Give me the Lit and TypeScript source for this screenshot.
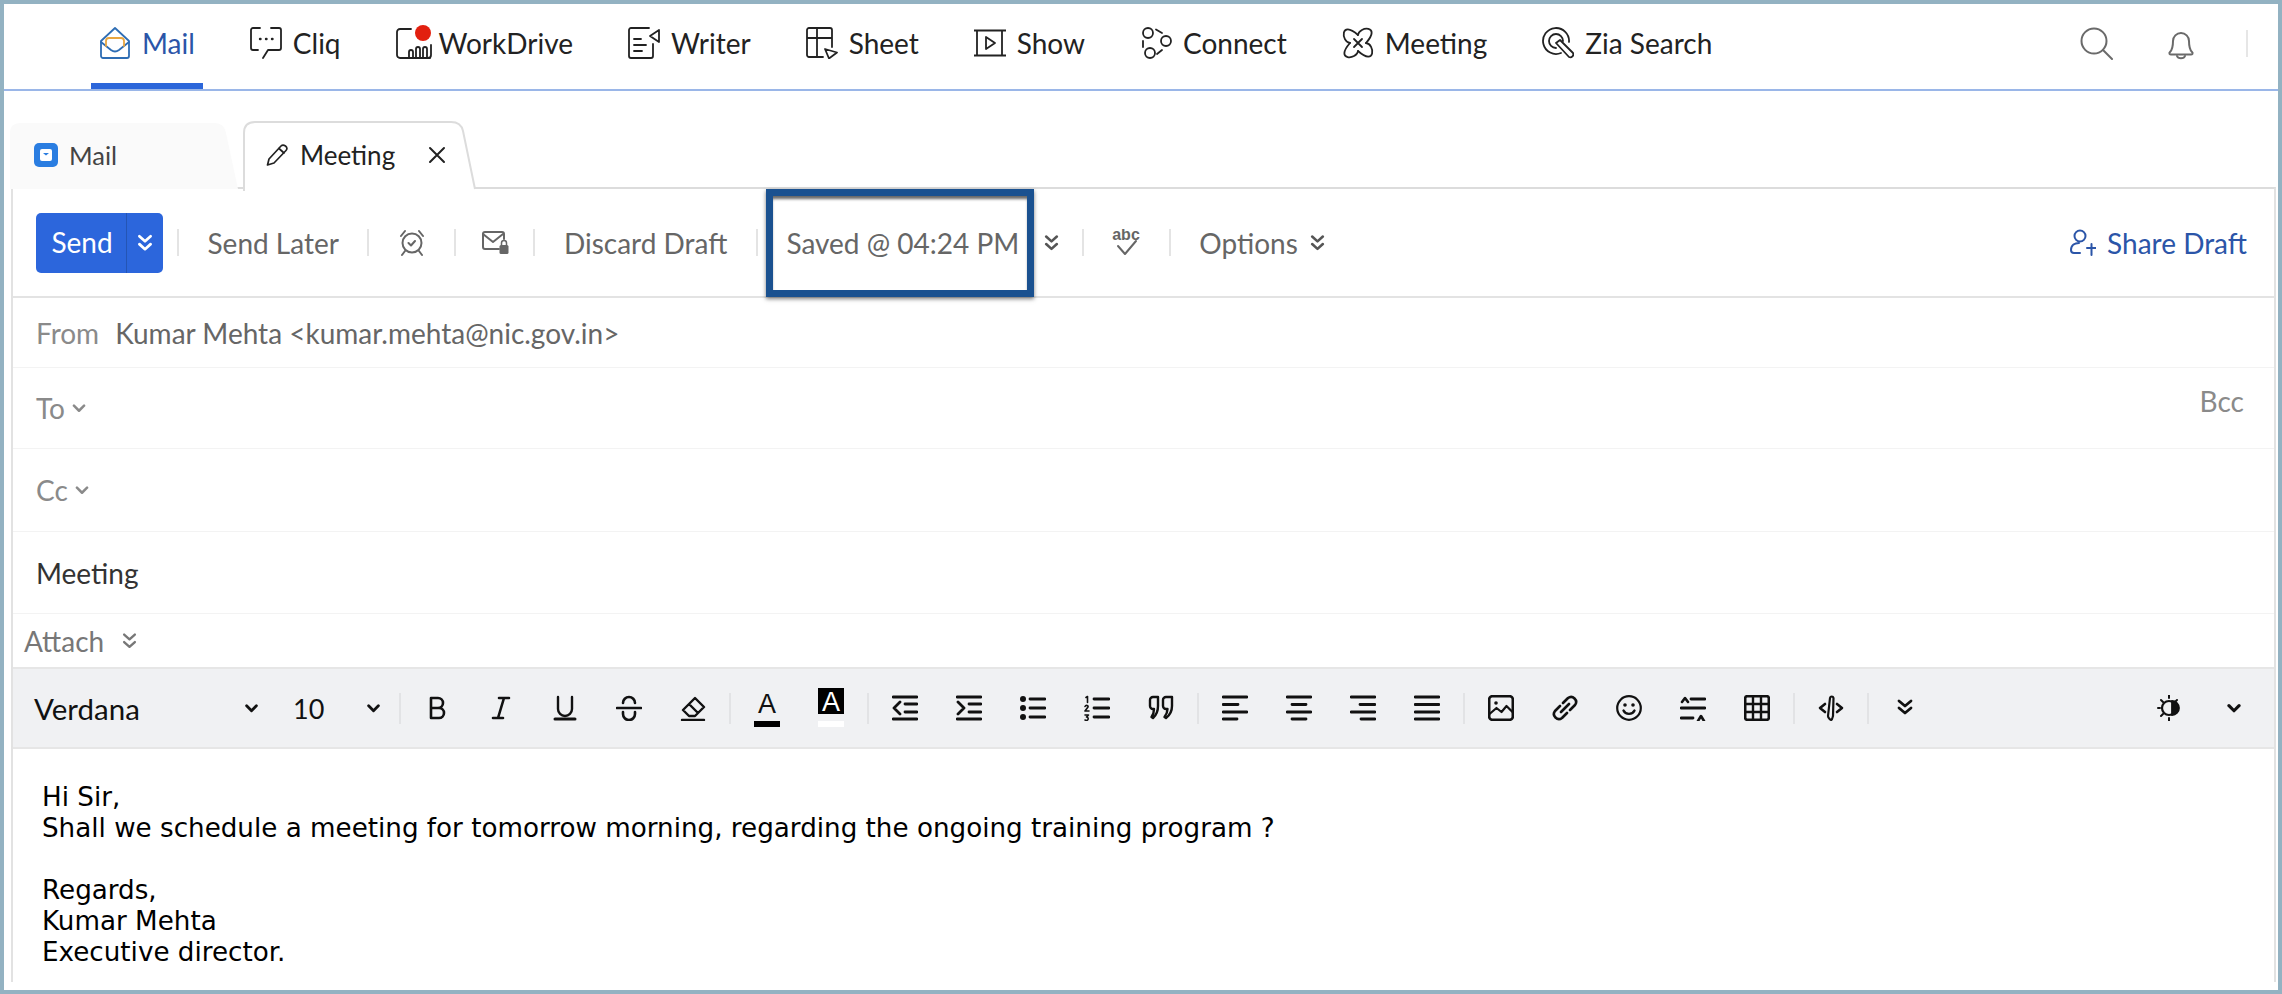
import { LitElement, html, css, svg } from "lit";
import { customElement } from "lit/decorators.js";

const ic = (w: number, h: number, body: unknown, cls = "") =>
  html`<svg class="ic ${cls}" width=${w} height=${h} viewBox="0 0 ${w} ${h}" fill="none" stroke="currentColor" stroke-width="1.8" stroke-linecap="round" stroke-linejoin="round">${body}</svg>`;

const lobe = "M16 8C17 -1 40 -2 24 16";
const navIcons: Record<string, unknown> = {
  Mail: svg`<path d="M2 14 16 1l14 13v15a2 2 0 0 1-2 2H4a2 2 0 0 1-2-2Z" stroke="#2e6db4"/><path d="M2 15l10 8q4 3 8 0l10-8" stroke="#2e6db4"/><path d="M7 19v-5a3 3 0 0 1 3-3h12a3 3 0 0 1 3 3v5" stroke="#e9a63f"/>`,
  Cliq: svg`<path d="M10 1H3a2 2 0 0 0-2 2v18a2 2 0 0 0 2 2h5M21 1h8a2 2 0 0 1 2 2v18a2 2 0 0 1-2 2H18l-5 8"/><path d="M10 12h.5M16 12h.5M22 12h.5" stroke-width="2.400"/>`,
  WorkDrive: svg`<path d="M11 31H4a3 3 0 0 1-3-3V5a3 3 0 0 1 3-3h11M35 18v10a3 3 0 0 1-3 3"/><path d="M10 31h24M13 31v-6a2 2 0 0 1 4 0v6M20 31V22a2 2 0 0 1 4 0v9M27 31v-9a2 2 0 0 1 4 0v9"/>`,
  Writer: svg`<path d="M21 1H3a2 2 0 0 0-2 2v26a2 2 0 0 0 2 2h20a2 2 0 0 0 2-2V17"/><path d="M31 3l-9 6 9 6ZM6 12h7M6 18h12M6 24h8"/>`,
  Sheet: svg`<path d="M17 30H3a2 2 0 0 1-2-2V3a2 2 0 0 1 2-2h21a2 2 0 0 1 2 2v17M1 11h25M11 1v29"/><path d="M19 22l12 3.500-8 6Z"/>`,
  Show: svg`<path d="M0 3.500h32M0 28.500h32M3 3.500v25M28 3.500v25"/><path d="M12 10l9 6-9 6Z"/>`,
  Connect: svg`<circle cx="8" cy="6" r="5"/><circle cx="26" cy="14" r="5"/><circle cx="10" cy="26" r="5"/><path d="M16 2.500l6 3.500M3 14v6M17 27l5-4"/>`,
  Meeting: svg`<path d="${lobe}"/><path d="${lobe}" transform="rotate(90 16 16)"/><path d="${lobe}" transform="rotate(180 16 16)"/><path d="${lobe}" transform="rotate(270 16 16)"/><path d="M12 12l8 8M20 12l-8 8"/>`,
  "Zia Search": svg`<path d="M19 26A13 13 0 1 1 27 15"/><path d="M14 21a7 7 0 1 1 7-7"/><path d="M14 16l4-3 13 13a3 3 0 0 1-4 4Z"/>`,
};

const chev2 = (w = 15, h = 18, sw = 2.4) =>
  html`<svg class="ic" width=${w} height=${h} viewBox="0 0 14 16" fill="none" stroke="currentColor" stroke-width=${sw} stroke-linecap="round" stroke-linejoin="round"><path d="M2 2l5 4.500L12 2M2 9l5 4.500L12 9"/></svg>`;
const chev1 = (w = 12, sw = 2.2) =>
  html`<svg class="ic" width=${w} height="9" viewBox="0 0 12 8" fill="none" stroke="currentColor" stroke-width=${sw} stroke-linecap="round" stroke-linejoin="round"><path d="M1.500 1.500 6 6l4.500-4.500"/></svg>`;

const ed = (body: unknown) => ic(26, 26, body, "ed");

@customElement("app-root")
export class AppRoot extends LitElement {
  static styles = css`
    :host { display: block; width: 2282px; height: 994px; box-sizing: border-box; border: 4px solid #93b2c2; background: #fff; font-family: Lato, "Liberation Sans", sans-serif; font-size: 28px; overflow: hidden; position: relative; }
    .ic { display: block; flex: none; }
    .nav { display: flex; align-items: stretch; height: 85px; border-bottom: 2px solid #9ab6e8; box-sizing: content-box; padding-left: 87px; color: #222; }
    .nav-item { display: flex; align-items: center; gap: 11px; padding: 0 8px; margin-right: 39px; height: 85px; box-sizing: border-box; position: relative; white-space: nowrap; padding-bottom: 8px; }
    .nav-item.wd { gap: 7px; }
    .nav-item.on { color: #2b55a8; }
    .nav-item.on::after { content: ""; position: absolute; left: 0; right: 0; bottom: 0; height: 6px; background: #2c66da; }
    .dot { position: absolute; left: 27px; top: 21px; width: 16px; height: 16px; border-radius: 50%; background: #e2200f; }
    .nav-right { margin-left: auto; display: flex; align-items: center; color: #6a6a6a; padding-bottom: 6px; padding-right: 30px; }
    .nav-right .bell { margin-left: 54px; }
    .nav-sep { width: 2px; height: 27px; background: #e6e6e6; margin-left: 51px; }
    .tabs { display: flex; align-items: flex-end; height: 98px; padding-left: 6px; margin-bottom: -2px; position: relative; z-index: 1; }
    .tab-mail { width: 232px; height: 66px; display: flex; align-items: center; padding-left: 24px; gap: 11px; box-sizing: border-box; position: relative; color: #444; font-size: 25.500px; padding-bottom: 2px; }
    .tab-meet { width: 234px; height: 68px; margin-left: 1px; display: flex; align-items: center; padding-left: 22px; box-sizing: border-box; position: relative; color: #222; font-size: 26px; }
    .tab-bg { position: absolute; left: 0; top: 0; z-index: -1; }
    .tab-meet .lbl { margin-left: 11px; }
    .tab-meet .x { margin-left: 33px; }
    .compose { margin-left: 7px; width: 2265px; height: 795px; box-sizing: border-box; border-top: 2px solid #dcdcdc; border-left: 2px solid #e2e2e2; border-right: 2px solid #e2e2e2; position: relative; }
    .tb { display: flex; align-items: center; height: 109px; box-sizing: border-box; border-bottom: 2px solid #e3e3e3; padding-left: 23px; padding-right: 27px; color: #666; white-space: nowrap; }
    .send { display: flex; height: 60px; width: 127px; background: #2c66dc; border-radius: 5px; color: #fff; align-items: center; flex: none; }
    .send .t { width: 91px; box-sizing: border-box; text-align: center; padding-left: 2px; height: 60px; line-height: 58px; border-right: 1px solid #2455b5; }
    .send .c { flex: 1; display: flex; justify-content: center; }
    .sep { width: 2px; height: 27px; background: #e4e4e4; flex: none; margin: 0 28.500px; }
    .sep.first { margin-left: 14px; }
    .lock { margin: 0 -4px; }
    .ch { margin-left: 25px; margin-right: -6px; color: #555; }
    .opt { margin-left: 12px; color: #555; }
    .share { margin-left: auto; display: flex; align-items: center; gap: 11px; color: #2b55a8; }
    .row { display: flex; align-items: center; box-sizing: border-box; border-bottom: 1px solid #f3f3f3; padding-left: 23px; color: #8a8a8a; position: relative; }
    .r-from { height: 70px; }
    .r-from .v { color: #666; margin-left: 16px; }
    .r-to { height: 81px; gap: 7px; }
    .r-cc { height: 83px; gap: 7px; }
    .r-sub { height: 82px; color: #333; }
    .bcc { position: absolute; right: 30px; top: 16px; }
    .attach { display: flex; align-items: center; height: 53px; padding-left: 11px; color: #777; gap: 18px; box-sizing: border-box; }
    .etb { display: flex; align-items: center; height: 82px; box-sizing: border-box; background: #f0f1f3; border-top: 2px solid #e6e6e6; border-bottom: 2px solid #e6e6e6; color: #111; padding-left: 21px; padding-right: 33px; }
    .font { width: 224px; display: flex; align-items: center; font-size: 29.500px; }
    .font svg { margin-left: auto; }
    .size { width: 87px; margin-left: 35px; display: flex; align-items: center; font-size: 27px; }
    .size svg { margin-left: auto; }
    .esep { width: 2px; height: 31px; background: #e2e3e5; flex: none; margin: 0 23px 0 19px; }
    .esep.n { margin: 0 23px; }
    .group { display: flex; gap: 38px; align-items: center; }
    .spacer { flex: 1; }
    .etb-end { display: flex; align-items: center; gap: 44px; }
    .body { padding: 33px 0 0 29px; font-family: "DejaVu Sans", Verdana, sans-serif; font-size: 26.200px; line-height: 31px; color: #000; }
    .body div { min-height: 31px; white-space: nowrap; }
    .callout { position: absolute; left: 762px; top: 185px; width: 268px; height: 108px; box-sizing: border-box; border: 7px solid #1a5190; box-shadow: 0 2px 4px rgba(0,0,0,.5), inset 0 4px 3px -1px rgba(0,0,0,.6); }
  `;

  render() {
    const navs = ["Mail", "Cliq", "WorkDrive", "Writer", "Sheet", "Show", "Connect", "Meeting", "Zia Search"];
    return html`
      <div class="nav">
        ${navs.map(
          (n, i) => html`<div class="nav-item ${i === 0 ? "on" : ""} ${n === "WorkDrive" ? "wd" : ""}">
            ${ic(n === "WorkDrive" ? 36 : 32, 32, navIcons[n])}
            ${n === "WorkDrive" ? html`<span class="dot"></span>` : ""}
            <span>${n}</span>
          </div>`
        )}
        <div class="nav-right">
          ${ic(33, 33, svg`<circle cx="14" cy="14" r="12.500" stroke-width="2"/><path d="M23 23l9 9" stroke-width="2"/>`)}
          <span class="bell">${ic(28, 32, svg`<path d="M3 24c3-3 3-7 3-11a8 8 0 0 1 16 0c0 4 0 8 3 11 1.500 1.500 0 2.500-1 2.500H4C3 26.500 1.500 25.500 3 24Z" stroke-width="2"/><path d="M10 28c1 3 7 3 8 0" stroke-width="2"/>`)}</span>
          <span class="nav-sep"></span>
        </div>
      </div>

      <div class="tabs">
        <div class="tab-mail">
          <svg class="tab-bg" width="232" height="66" viewBox="0 0 232 66"><path d="M0 66V10Q0 0 10 0H205Q214 0 216 10L228 66Z" fill="#fafafa"/></svg>
          <svg class="ic" width="24" height="24" viewBox="0 0 24 24"><rect width="24" height="24" rx="5" fill="#2a7de1"/><rect x="6" y="6" width="12" height="12" rx="2" fill="#fff"/><path d="M9 10l3 2.500 3-2.500Z" fill="#2a7de1"/></svg>
          <span>Mail</span>
        </div>
        <div class="tab-meet">
          <svg class="tab-bg" width="234" height="70" viewBox="0 0 234 70"><path d="M1 70V12Q1 1 12 1H208Q218 1 220 10L232 68" fill="#fff" stroke="#dcdcdc" stroke-width="2"/></svg>
          ${ic(24, 22, svg`<path d="M4 15 16 2c1-1 3-1 4.500 0s2 3 .5 4.500L9 19l-6.500 2Z" stroke-width="1.700"/><path d="M14 4.500 19 9" stroke-width="1.700"/>`)}
          <span class="lbl">Meeting</span>
          <span class="x">${ic(18, 18, svg`<path d="M2 2l14 14M16 2 2 16" stroke-width="2"/>`)}</span>
        </div>
      </div>

      <div class="compose">
        <div class="tb">
          <div class="send"><span class="t">Send</span><span class="c">${chev2(16, 18, 2.4)}</span></div>
          <span class="sep first"></span>
          <span>Send Later</span>
          <span class="sep"></span>
          ${ic(28, 28, svg`<circle cx="14" cy="14" r="9.500" stroke-width="2"/><path d="M10.500 14l2.500 2.500 4-4.500M3 7l4-5M25 7l-4-5M7 22l-3 4M21 22l3 4" stroke-width="2"/>`)}
          <span class="sep"></span>
          <span class="lock">${ic(28, 26, svg`<path d="M18 19H4a2 2 0 0 1-2-2V4a2 2 0 0 1 2-2h17a2 2 0 0 1 2 2v5" stroke-width="2"/><path d="M2 4l10 8 10-8" stroke-width="2"/><rect x="18.500" y="15" width="9" height="9" rx="1.500" fill="currentColor" stroke="none"/><path d="M20.500 15v-2a2.500 2.500 0 0 1 5 0v2" stroke-width="1.500"/>`)}</span>
          <span class="sep"></span>
          <span>Discard Draft</span>
          <span class="sep"></span>
          <span>Saved @ 04:24 PM</span>
          <span class="ch">${chev2()}</span>
          <span class="sep"></span>
          <svg class="ic" width="28" height="28" viewBox="0 0 28 28" fill="none" stroke="currentColor" stroke-width="2" stroke-linecap="round" stroke-linejoin="round"><text x="14" y="11" text-anchor="middle" font-family="Liberation Sans, sans-serif" font-weight="700" font-size="16" fill="currentColor" stroke="none">abc</text><path d="M6 17l7 8 11-13"/></svg>
          <span class="sep"></span>
          <span>Options</span>
          <span class="opt">${chev2()}</span>
          <div class="share">
            ${ic(26, 27, svg`<circle cx="10" cy="7" r="5.500" stroke-width="2"/><path d="M9 14c-4 0-8 2-8 7 0 2 1 3 3 3h6M17 19h9M21.500 15v11" stroke-width="2"/>`)}
            <span>Share Draft</span>
          </div>
        </div>
        <div class="row r-from"><span>From</span><span class="v">Kumar Mehta &lt;kumar.mehta@nic.gov.in&gt;</span></div>
        <div class="row r-to"><span>To</span>${chev1(14)}<span class="bcc">Bcc</span></div>
        <div class="row r-cc"><span>Cc</span>${chev1(14)}</div>
        <div class="row r-sub"><span>Meeting</span></div>
        <div class="attach"><span>Attach</span>${chev2(15, 18, 2.2)}</div>
        <div class="etb">
          <div class="font"><span>Verdana</span>${chev1(13, 2.6)}</div>
          <div class="size"><span>10</span>${chev1(13, 2.6)}</div>
          <span class="esep"></span>
          <div class="group">
            ${ed(svg`<path d="M7 3v20M7 3h7a5 5 0 0 1 0 10H7M7 13h8a5 5 0 0 1 0 10H7" stroke-width="2.600"/>`)}
            ${ed(svg`<path d="M11 3h10M5 23h10M16 3 10 23" stroke-width="2.600"/>`)}
            ${ed(svg`<path d="M6 2v12a7 7 0 0 0 14 0V2" stroke-width="2.400"/><path d="M3 24h20" stroke-width="3"/>`)}
            ${ed(svg`<path d="M7 8a6 6 0 0 1 12 0M1 13h24M7 17v2a6 6 0 0 0 12 0v-2" stroke-width="2.600"/>`)}
            ${ed(svg`<path d="M3 15 15 3l9 9-9 9H9ZM9 9l9 9M2 25h22" stroke-width="2.400"/>`)}
          </div>
          <span class="esep n"></span>
          <div class="group">
            <div class="cell-a">
              <svg class="ic" width="26" height="40" viewBox="0 0 26 40"><text x="13" y="25" text-anchor="middle" font-family="Liberation Sans, sans-serif" font-size="27" fill="#111">A</text><rect y="33" width="26" height="6" fill="#000"/></svg>
            </div>
            <svg class="ic" width="26" height="40" viewBox="0 0 26 40"><rect width="26" height="26" fill="#000"/><text x="13" y="23" text-anchor="middle" font-family="Liberation Sans, sans-serif" font-size="27" fill="#fff">A</text><rect y="33" width="26" height="6" fill="#fff"/></svg>
          </div>
          <span class="esep n"></span>
          <div class="group">
            ${ed(svg`<path d="M1 2h24M13 9h12M13 17h12M1 24h24M8 7l-6 6 6 6" stroke-width="2.800"/>`)}
            ${ed(svg`<path d="M1 2h24M13 9h12M13 17h12M1 24h24M2 7l6 6-6 6" stroke-width="2.800"/>`)}
            ${ed(svg`<circle cx="3" cy="4" r="3" fill="currentColor" stroke="none"/><circle cx="3" cy="13" r="3" fill="currentColor" stroke="none"/><circle cx="3" cy="22" r="3" fill="currentColor" stroke="none"/><path d="M10 4h15M10 13h15M10 22h15" stroke-width="2.800"/>`)}
            ${ed(svg`<path d="M10 4h15M10 13h15M10 22h15" stroke-width="2.800"/><path d="M2 2.500l1.500-1v6M1 11.500c1-2 3.500-1 3 .5L1 16h4M1 20h3.500l-2 2c2 0 2.500 3 0 3.500l-1.500-.5" stroke-width="1.600"/>`)}
            ${ed(svg`<path d="M2 5a3 3 0 0 1 3-3h5v9c0 5-1.500 9-5 12l-1.500-1c1.500-2 2.500-5 2.500-8H5a3 3 0 0 1-3-3ZM15 5a3 3 0 0 1 3-3h6v9c0 5-2 9-6 12l-1.500-1c1.500-2 3-5 3-8H18a3 3 0 0 1-3-3Z" stroke-width="2.400"/>`)}
          </div>
          <span class="esep n"></span>
          <div class="group">
            ${ed(svg`<path d="M1 2h24M1 9.500h15M1 17h24M1 24h14" stroke-width="2.800"/>`)}
            ${ed(svg`<path d="M1 2h24M6 9.500h14M1 17h24M6 24h14" stroke-width="2.800"/>`)}
            ${ed(svg`<path d="M1 2h24M10 9.500h15M1 17h24M11 24h14" stroke-width="2.800"/>`)}
            ${ed(svg`<path d="M1 2h24M1 9.500h24M1 17h24M1 24h24" stroke-width="2.800"/>`)}
          </div>
          <span class="esep n"></span>
          <div class="group">
            ${ed(svg`<rect x="1.200" y="1.200" width="23.600" height="23.600" rx="3" stroke-width="2.600"/><circle cx="8" cy="8" r="1.800" fill="currentColor" stroke="none"/><path d="M1.500 19l7-6 5 4 5-6 6 6" stroke-width="2.200"/>`)}
            ${ed(svg`<path d="M11 8l5-5a5 5 0 0 1 7 7l-5 5M15 18l-5 5a5 5 0 0 1-7-7l5-5M9 17l8-8" stroke-width="2.600"/>`)}
            ${ed(svg`<circle cx="13" cy="13" r="11.800" stroke-width="2.200"/><circle cx="9" cy="10" r="1.800" fill="currentColor" stroke="none"/><circle cx="17" cy="10" r="1.800" fill="currentColor" stroke="none"/><path d="M7.500 15.500c2 4.500 9 4.500 11 0" stroke-width="2.400"/>`)}
            ${ed(svg`<path d="M11 4h14M1 13h24M1 23h12" stroke-width="2.800"/><path d="M2 7l3-4 3 4M18 26l3-5 3 5" stroke-width="2.600"/>`)}
            ${ed(svg`<rect x="1.200" y="1.200" width="23.600" height="23.600" rx="2" stroke-width="2.600"/><path d="M9 1v24M17 1v24M1 9h24M1 17h24" stroke-width="2.400"/>`)}
          </div>
          <span class="esep n"></span>
          ${ed(svg`<path d="M7 9l-5 4 5 4M19 9l5 4-5 4" stroke-width="2.600"/><path d="M10 21 12 3c.5-2 3-2 3.500 0L15 21c-.5 2-1 4-1.700 4s-3.300-2-3.300-4Z" stroke-width="2.200"/>`)}
          <span class="esep n"></span>
          ${ed(svg`<path d="M7 6l6 5 6-5M7 13l6 5 6-5" stroke-width="2.800"/>`)}
          <span class="spacer"></span>
          <div class="etb-end">
            ${ed(svg`<circle cx="12" cy="13" r="7" stroke-width="2.200"/><path d="M15 6a7 7 0 0 1 0 14Z" fill="currentColor" stroke="currentColor"/><path d="M12 0v3M12 23v3M1 13h2M4 5l2 2M4 21l2-2M20 5l-2 2" stroke-width="2"/>`)}
            ${chev1(14, 2.8)}
          </div>
        </div>
        <div class="body">
          <div>Hi Sir,</div>
          <div>Shall we schedule a meeting for tomorrow morning, regarding the ongoing training program ?</div>
          <div></div>
          <div>Regards,</div>
          <div>Kumar Mehta</div>
          <div>Executive director.</div>
        </div>
      </div>
      <div class="callout"></div>
    `;
  }
}
